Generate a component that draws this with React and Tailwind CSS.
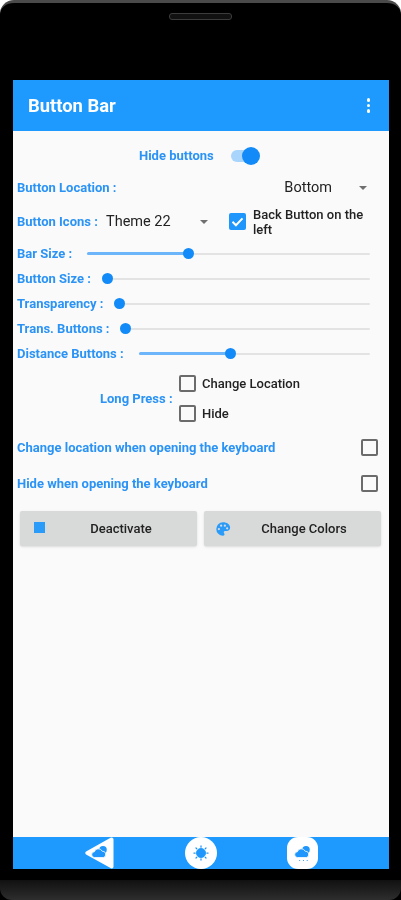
const font = { fontFamily: 'Roboto, "Liberation Sans", sans-serif' };

function Box({ checked }) {
  return checked ? (
    <span className="flex h-[17px] w-[17px] shrink-0 items-center justify-center rounded-[2px] bg-[#1e96fb]">
      <svg viewBox="0 0 24 24" className="h-[15px] w-[15px]" fill="none" stroke="#fff" strokeWidth="3.2">
        <path d="M4 12.5l5.5 5.5L20 7" />
      </svg>
    </span>
  ) : (
    <span className="block h-[17px] w-[17px] shrink-0 rounded-[2px] border-2 border-[#6b6b6b]" />
  );
}

function Caret() {
  return <span className="block h-0 w-0 border-x-[4px] border-t-[4px] border-x-transparent border-t-[#6f6f6f]" />;
}

function Slider({ label, labelW, thumb, active }) {
  return (
    <div className="flex h-[25px] items-center pl-1 pr-[19px]">
      <span className="shrink-0 text-[13px] font-bold text-[#2a93f5]" style={{ width: labelW }}>{label}</span>
      <div className="relative h-[2px] flex-1 rounded-full bg-[#e3e3e3]">
        {active && <div className="absolute left-0 top-[-0.5px] h-[3px] rounded-full bg-[#6db5fb]" style={{ width: thumb }} />}
        <span className="absolute top-[-4.5px] h-[11px] w-[11px] rounded-full bg-[#128bf8]" style={{ left: thumb - 5.5 }} />
      </div>
    </div>
  );
}

function Cloud({ rain }) {
  return (
    <svg viewBox="0 0 24 24" className="h-[18px] w-[18px]" fill="#1e96fb">
      <circle cx="16" cy="7.5" r="5" />
      <path d="M5 18a3.800 3.800 0 0 1-.5-7.600 5.500 5.500 0 0 1 10.300-.8A4.300 4.300 0 0 1 16.500 18z" stroke="#fff" strokeWidth="1" />
      {rain && <path d="M7 22h1.200M12 22h1.200M17 22h1.200" stroke="#1e96fb" strokeWidth="1.300" />}
    </svg>
  );
}

export default function App() {
  return (
    <div className="h-[900px] w-[401px] overflow-hidden bg-white" style={font}>
      <div className="flex h-full flex-col rounded-t-[14px] border-t-[3px] border-[#4a4a4a] bg-black blur-[0.7px]">
        <div className="flex h-[77px] shrink-0 justify-center pt-[10px]">
          <span className="block h-[7px] w-[63px] rounded-[3px] border border-[#3c3c3c] bg-[#111]" />
        </div>
        <div className="ml-[13px] mr-[12px] flex h-[789px] shrink-0 flex-col bg-[#fafafa]">
          <header className="flex h-[51px] shrink-0 items-center justify-between bg-[#1e9aff] pl-[15px] pr-[19px]">
            <span className="text-[18.400px] font-bold text-white">Button Bar</span>
            <span className="flex flex-col gap-[2px]">
              <i className="block h-[3.500px] w-[3.500px] rounded-full bg-white" />
              <i className="block h-[3.500px] w-[3.500px] rounded-full bg-white" />
              <i className="block h-[3.500px] w-[3.500px] rounded-full bg-white" />
            </span>
          </header>

          <div className="flex flex-1 flex-col">
            <div className="flex h-[44px] shrink-0 items-center pl-[126px] pt-[6px]">
              <span className="w-[92px] text-[13px] font-bold text-[#2a93f5]">Hide buttons</span>
              <div className="relative h-[12px] w-[24px] rounded-full bg-[#a9d4fb]">
                <span className="absolute left-[10.500px] top-[-3px] h-[18px] w-[18px] rounded-full bg-[#128bf8]" />
              </div>
            </div>

            <div className="flex h-[24px] shrink-0 items-center pl-1 pr-[22px] pt-[1px]">
              <span className="text-[13px] font-bold text-[#2a93f5]">Button Location :</span>
              <span className="ml-auto text-[14.500px] text-[#222]">Bottom</span>
              <span className="ml-[27px]"><Caret /></span>
            </div>

            <div className="flex h-[44px] shrink-0 items-center pl-1 pt-[1px]">
              <span className="w-[89px] text-[13px] font-bold text-[#2a93f5]">Button Icons :</span>
              <span className="w-[94px] text-[14.500px] text-[#222]">Theme 22</span>
              <Caret />
              <span className="ml-[21px]"><Box checked /></span>
              <span className="ml-[7px] w-[120px] text-[13px] font-medium leading-[15px] text-[#222]">Back Button on the left</span>
            </div>

            <div className="mt-[-2px] flex shrink-0 flex-col">
              <Slider label="Bar Size :" labelW={70} thumb={101} active />
              <Slider label="Button Size :" labelW={90} thumb={0} />
              <Slider label="Transparency :" labelW={102} thumb={0} />
              <Slider label="Trans. Buttons :" labelW={108} thumb={0} />
              <Slider label="Distance Buttons :" labelW={122} thumb={91} active />
            </div>

            <div className="mt-[8px] flex shrink-0 items-center pl-[87px]">
              <span className="w-[79px] text-[13px] font-bold text-[#2a93f5]">Long Press :</span>
              <div className="flex flex-col gap-[10.500px]">
                <div className="flex items-center gap-[6px]">
                  <Box />
                  <span className="text-[13px] font-medium text-[#222]">Change Location</span>
                </div>
                <div className="flex items-center gap-[6px]">
                  <Box />
                  <span className="text-[13px] font-medium text-[#222]">Hide</span>
                </div>
              </div>
            </div>

            <div className="mt-[6px] flex h-[36px] shrink-0 items-center justify-between pl-1 pr-[11px]">
              <span className="text-[13px] font-bold text-[#2a93f5]">Change location when opening the keyboard</span>
              <Box />
            </div>
            <div className="flex h-[36px] shrink-0 items-center justify-between pl-1 pr-[11px]">
              <span className="text-[13px] font-bold text-[#2a93f5]">Hide when opening the keyboard</span>
              <Box />
            </div>

            <div className="mt-[9.500px] flex shrink-0 gap-[7px] pl-[7px] pr-2">
              <button className="flex h-[35px] w-[177px] items-center rounded-[2px] bg-[#d8d9d9] pl-[14px] text-[13px] font-medium text-[#222] shadow-sm">
                <span className="mb-[2px] block h-[11px] w-[11px] bg-[#2a9bf8]" />
                <span className="flex-1 text-center">Deactivate</span>
              </button>
              <button className="flex h-[35px] flex-1 items-center rounded-[2px] bg-[#d8d9d9] pl-[10px] pr-[5px] text-[13px] font-medium text-[#222] shadow-sm">
                <svg viewBox="0 0 24 24" className="h-[18px] w-[18px]" fill="#2a9bf8">
                  <path d="M12 3a9 9 0 0 0 0 18c1.400 0 2-1 2-2 0-.6-.3-1-.5-1.400-.3-.4-.5-.8-.5-1.300 0-1 .8-1.800 2-1.800h2c2.500 0 4.500-1.800 4.500-4.500C21.500 6 17.200 3 12 3z" />
                  <g fill="#d8d9d9">
                    <circle cx="6.500" cy="12" r="1.500" />
                    <circle cx="9.500" cy="7.500" r="1.500" />
                    <circle cx="14.500" cy="7.500" r="1.500" />
                    <circle cx="17.500" cy="11" r="1.500" />
                  </g>
                </svg>
                <span className="flex-1 text-center">Change Colors</span>
              </button>
            </div>
          </div>

          <nav className="flex h-[32px] shrink-0 items-center bg-[#1e9aff] pl-[72px]">
            <div className="relative flex h-[32px] w-[29px] items-center justify-end">
              <svg viewBox="0 0 29 32" className="absolute inset-0 h-[32px] w-[29px]" fill="#fff">
                <path d="M26 0.500c1.500-.4 2.500.6 2.500 2v27c0 1.500-1.200 2.300-2.500 1.700L1.500 17.800c-1.700-.9-1.700-2.700 0-3.600z" />
              </svg>
              <span className="relative mr-[5px] mt-[-1px]"><Cloud /></span>
            </div>
            <div className="ml-[71px] flex h-[32px] w-[32px] items-center justify-center rounded-full bg-white">
              <svg viewBox="0 0 24 24" className="h-[20px] w-[20px]" fill="#1e96fb" stroke="#1e96fb">
                <circle cx="12" cy="12" r="5.500" />
                <path strokeWidth="1.500" strokeLinecap="round" d="M12 3.500v1.500M12 19v1.500M3.500 12h1.500M19 12h1.500M6 6l1 1M17 17l1 1M6 18l1-1M17 7l1-1" />
              </svg>
            </div>
            <div className="ml-[70px] flex h-[32px] w-[31px] items-center justify-center rounded-[11px] bg-white">
              <Cloud rain />
            </div>
          </nav>
        </div>
        <div className="h-[11px] shrink-0 bg-black" />
        <div className="flex-1 rounded-b-[12px] bg-gradient-to-b from-[#111] to-[#2e2e2e]" />
      </div>
    </div>
  );
}
